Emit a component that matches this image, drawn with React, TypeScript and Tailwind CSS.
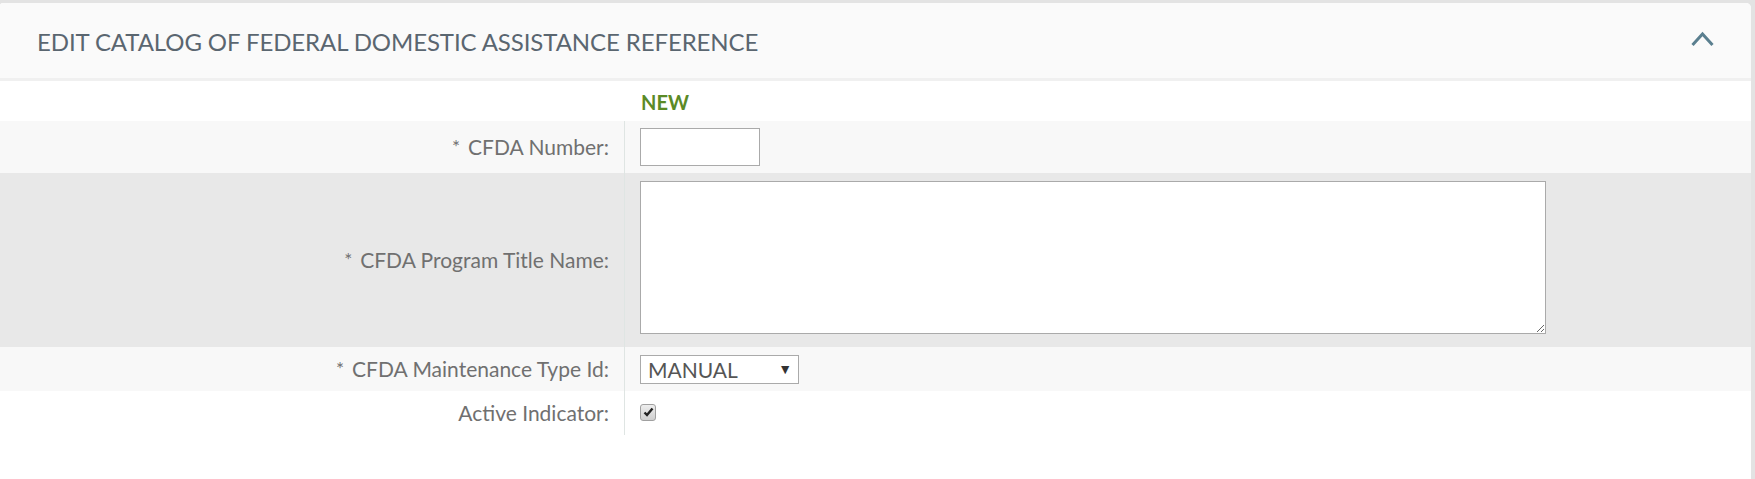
import React from "react";

function Label({ text, required }: { text: string; required?: boolean }) {
  return (
    <span className="text-[21px] text-[#707070]">
      {required && <span className="mr-[8px] text-[19px] align-[1px]">*</span>}
      {text}
    </span>
  );
}

function Row({
  bg,
  label,
  required,
  children,
  className = "",
}: {
  bg: string;
  label: string;
  required?: boolean;
  children: React.ReactNode;
  className?: string;
}) {
  return (
    <div className={`flex ${bg} ${className}`}>
      <div className="w-[625px] shrink-0 flex items-center justify-end pr-[15px] border-r border-[#dfe5e3]">
        <Label text={label} required={required} />
      </div>
      <div className="flex-1 flex items-center pl-[15px]">{children}</div>
    </div>
  );
}

export default function App() {
  return (
    <div
      className="w-[1755px] h-[479px] bg-[#e3e3e3] pt-[3px] pr-[4px] overflow-hidden"
      style={{ fontFamily: "Lato, 'Open Sans', sans-serif" }}
    >
      <div className="bg-white h-full rounded-tr-[5px] rounded-tl-[3px] overflow-hidden">
        <div className="h-[78px] bg-[#fafafa] flex items-center justify-between pl-[37px] pr-[37px] border-b-[3px] border-[#f0f0f0]">
          <h2 className="text-[24px] font-normal text-[#5a6670] tracking-[-0.1px] leading-none mt-[2px]">
            EDIT CATALOG OF FEDERAL DOMESTIC ASSISTANCE REFERENCE
          </h2>
          <svg width="23" height="16" viewBox="0 0 23 16" className="text-[#5a7f8f] -mt-[3px]">
            <path d="M1.5 14 L11.5 3 L21.5 14" fill="none" stroke="currentColor" strokeWidth="3" />
          </svg>
        </div>
        <div className="flex h-[40px]">
          <div className="w-[625px] shrink-0" />
          <div className="flex items-center pl-[16px] pt-[1px]">
            <span className="text-[20px] font-bold text-[#5b8a26]">NEW</span>
          </div>
        </div>
        <Row bg="bg-[#f8f8f8]" label="CFDA Number:" required className="h-[52px]">
          <input className="w-[120px] h-[38px] border border-[#aaaaaa] bg-white" />
        </Row>
        <Row bg="bg-[#e8e8e8]" label="CFDA Program Title Name:" required className="h-[174px]">
          <textarea className="w-[906px] h-[153px] border border-[#aaaaaa] bg-white -mt-[6px]" />
        </Row>
        <Row bg="bg-[#f8f8f8]" label="CFDA Maintenance Type Id:" required className="h-[44px]">
          <div className="w-[159px] h-[29px] border border-[#aaaaaa] bg-white flex items-center justify-between pl-[7px] pr-[6px]">
            <span className="text-[21px] text-[#555555] leading-none">MANUAL</span>
            <span className="text-[14px] text-[#333333] leading-none">▼</span>
          </div>
        </Row>
        <Row bg="bg-white" label="Active Indicator:" className="h-[44px]">
          <span className="w-[16px] h-[17px] rounded-[3px] border border-[#a0a0a0] bg-gradient-to-b from-[#eeeeee] to-[#cfcfcf] flex items-center justify-center -mt-[2px]">
            <svg width="11" height="10" viewBox="0 0 11 10">
              <path d="M1.5 5.5 L4 8 L9.5 1.5" fill="none" stroke="#222" strokeWidth="2.4" />
            </svg>
          </span>
        </Row>
      </div>
    </div>
  );
}
